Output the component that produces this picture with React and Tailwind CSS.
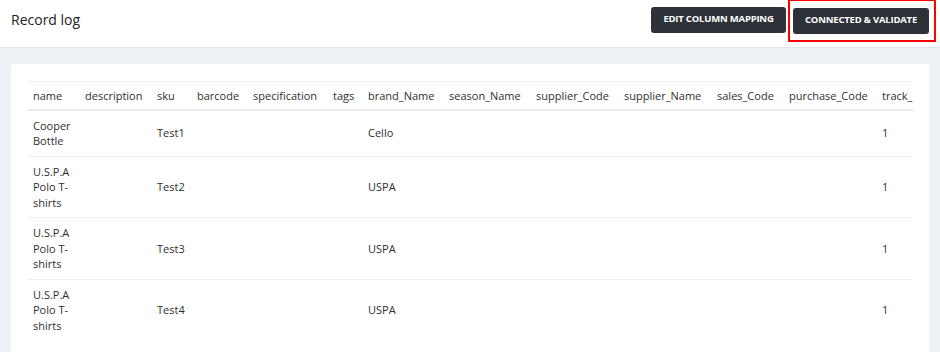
const columns = [
  { key: 'name', w: 'w-[52px]' },
  { key: 'description', w: 'w-[72px]' },
  { key: 'sku', w: 'w-[40px]' },
  { key: 'barcode', w: 'w-[56px]' },
  { key: 'specification', w: 'w-[80px]' },
  { key: 'tags', w: 'w-[35px]' },
  { key: 'brand_Name', w: 'w-[81px]' },
  { key: 'season_Name', w: 'w-[87px]' },
  { key: 'supplier_Code', w: 'w-[88px]' },
  { key: 'supplier_Name', w: 'w-[93px]' },
  { key: 'sales_Code', w: 'w-[72px]' },
  { key: 'purchase_Code', w: 'w-[93px]' },
  { key: 'track_Inventory', w: 'w-[90px]' },
];

const rows = [
  { name: 'Cooper Bottle', sku: 'Test1', brand_Name: 'Cello', track_Inventory: '1' },
  { name: 'U.S.P.A Polo T-shirts', sku: 'Test2', brand_Name: 'USPA', track_Inventory: '1' },
  { name: 'U.S.P.A Polo T-shirts', sku: 'Test3', brand_Name: 'USPA', track_Inventory: '1' },
  { name: 'U.S.P.A Polo T-shirts', sku: 'Test4', brand_Name: 'USPA', track_Inventory: '1' },
];

export default function App() {
  return (
    <div className="w-[940px] h-[352px] overflow-hidden bg-[#edf0f5] text-[#2f2f2f] font-['Open_Sans',sans-serif]">
      {/* Header */}
      <div className="h-[48px] bg-white border-b border-[#e3e6ea] flex items-center justify-between pl-[11px] pr-[11px]">
        <h1 className="text-[14px] text-[#222] -mt-[9px]">Record log</h1>
        <div className="flex items-center gap-[7px] -mt-[8px]">
          <button className="h-[26px] w-[135px] rounded-[3px] bg-[#2d3138] text-white text-[9.5px] font-bold tracking-[-0.2px]">
            EDIT COLUMN MAPPING
          </button>
          <div className="relative">
            <button className="h-[26px] w-[136px] rounded-[3px] bg-[#2d3138] text-white text-[9.5px] font-bold tracking-[-0.2px]">
              CONNECTED &amp; VALIDATE
            </button>
            {/* annotation box */}
            <div className="absolute -left-[5px] -top-[6px] w-[148px] h-[43px] border-2 border-[#ff0000]" />
          </div>
        </div>
      </div>

      {/* Card */}
      <div className="mt-[16px] mx-[11px] bg-white rounded-[2px] px-[16px] pt-[17px] h-[300px]">
        <div className="overflow-hidden">
          <table className="table-fixed border-collapse text-[11px] leading-[15.5px] w-[939px]">
            <thead>
              <tr className="border-t border-b-2 border-t-[#eef1f5] border-b-[#e8ecf1]">
                {columns.map((c) => (
                  <th key={c.key} className={`${c.w} text-left font-normal px-[6px] h-[28px] whitespace-nowrap`}>
                    {c.key}
                  </th>
                ))}
              </tr>
            </thead>
            <tbody>
              {rows.map((r, i) => (
                <tr key={i} className="border-b border-[#eef1f5] last:border-b-0">
                  {columns.map((c) => (
                    <td key={c.key} className="px-[6px] py-[7px] align-middle">
                      {r[c.key] || ''}
                    </td>
                  ))}
                </tr>
              ))}
            </tbody>
          </table>
        </div>
      </div>
    </div>
  );
}
